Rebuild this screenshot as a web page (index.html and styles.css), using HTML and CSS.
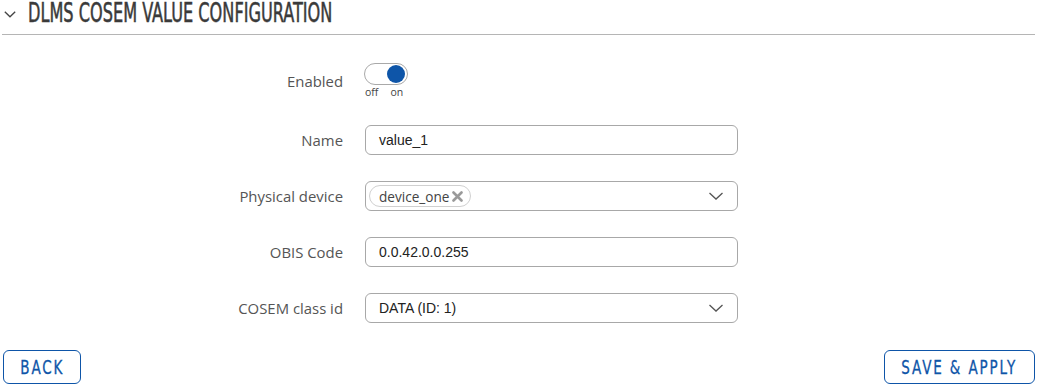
FILE: index.html
```html
<!DOCTYPE html>
<html>
<head>
<meta charset="utf-8">
<link rel="stylesheet" href="styles.css">
</head>
<body>
<div class="section-head">
  <svg class="chev" width="12" height="7" viewBox="0 0 12 7"><path d="M0.8 0.8 L6 5.8 L11.2 0.8" fill="none" stroke="#444" stroke-width="1.3"/></svg>
  <h2 class="title"><span class="squeeze">DLMS COSEM VALUE CONFIGURATION</span></h2>
</div>
<div class="form">
  <div class="row row-toggle">
    <label class="lbl">Enabled</label>
    <div class="ctrl">
      <div class="toggle"><span class="knob"></span></div>
      <div class="toggle-txt"><span>off</span><span>on</span></div>
    </div>
  </div>
  <div class="row">
    <label class="lbl">Name</label>
    <div class="ctrl"><div class="input">value_1</div></div>
  </div>
  <div class="row">
    <label class="lbl">Physical device</label>
    <div class="ctrl"><div class="input select">
      <span class="chip">device_one<svg class="x" width="11" height="11" viewBox="0 0 11 11"><path d="M1.5 1.5 L9.5 9.5 M9.5 1.5 L1.5 9.5" stroke="#9a9a9a" stroke-width="2.6" stroke-linecap="round"/></svg></span>
      <svg class="dd" width="16" height="10" viewBox="0 0 16 10"><path d="M1.5 2 L8 8 L14.5 2" fill="none" stroke="#555" stroke-width="1.3"/></svg>
    </div></div>
  </div>
  <div class="row">
    <label class="lbl">OBIS Code</label>
    <div class="ctrl"><div class="input">0.0.42.0.0.255</div></div>
  </div>
  <div class="row">
    <label class="lbl">COSEM class id</label>
    <div class="ctrl"><div class="input select">
      <span>DATA (ID: 1)</span>
      <svg class="dd" width="16" height="10" viewBox="0 0 16 10"><path d="M1.5 2 L8 8 L14.5 2" fill="none" stroke="#555" stroke-width="1.3"/></svg>
    </div></div>
  </div>
</div>
<div class="footer">
  <button class="btn btn-back"><span class="btn-txt">BACK</span></button>
  <button class="btn btn-save"><span class="btn-txt">SAVE &amp; APPLY</span></button>
</div>
</body>
</html>
```
FILE: styles.css
```css
html, body { margin: 0; padding: 0; background: #fff; }
body { font-family: "Open Sans", sans-serif; width: 1038px; }

.section-head {
  display: flex;
  align-items: flex-start;
  height: 34px;
  margin: 0 3px 0 2px;
  border-bottom: 1px solid #b5b5b5;
  padding-left: 2px;
}
.chev { margin-top: 11px; flex: none; }
.title {
  margin: -2px 0 0 12px;
  font-family: "DejaVu Sans Condensed", sans-serif;
  font-weight: normal;
  font-size: 26px;
  color: #3a3a3a;
  line-height: 30px;
  white-space: nowrap;
  -webkit-text-stroke: 0.5px #3a3a3a;
}
.squeeze {
  display: inline-block;
  transform: scaleX(0.69);
  transform-origin: left center;
}

.form {
  display: flex;
  flex-direction: column;
  gap: 26px;
  padding-top: 27px;
}
.row {
  display: grid;
  grid-template-columns: 343px 373px;
  column-gap: 22px;
  align-items: center;
  height: 30px;
}
.row-toggle { height: 37px; }
.lbl {
  text-align: right;
  font-size: 14.9px;
  color: #555;
}
.ctrl { display: flex; flex-direction: column; }

.toggle {
  width: 42px;
  height: 20px;
  border: 1px solid #a9a9a9;
  border-radius: 11px;
  position: relative;
  margin-left: -1px;
}
.knob {
  position: absolute;
  right: 2px;
  top: 1px;
  width: 18px;
  height: 18px;
  border-radius: 50%;
  background: #0e55a8;
}
.toggle-txt {
  display: flex;
  gap: 12px;
  font-size: 10.5px;
  color: #444;
  line-height: 12px;
  margin-top: 1px;
}

.input {
  height: 30px;
  box-sizing: border-box;
  border: 1px solid #a8a8a8;
  border-radius: 6px;
  display: flex;
  align-items: center;
  padding-left: 13px;
  font-family: "Liberation Sans", Arial, sans-serif;
  font-size: 14px;
  color: #222;
}
.select { justify-content: space-between; padding-right: 13px; }
.select .chip {
  font-family: "Open Sans", sans-serif;
  font-size: 13.6px;
  color: #444;
  border: 1px solid #d0d0d0;
  border-radius: 11px;
  height: 22px;
  box-sizing: border-box;
  display: flex;
  align-items: center;
  padding: 0 7px 0 9px;
  margin-left: -10px;
}
.chip .x { margin-left: 3px; }

.footer {
  display: flex;
  justify-content: space-between;
  padding: 0 3px;
  margin-top: 27px;
}
.btn {
  height: 34px;
  border: 1px solid #0e55a8;
  border-radius: 6px;
  background: #fff;
  color: #0e55a8;
  font-family: "DejaVu Sans Condensed", sans-serif;
  font-size: 20px;
  letter-spacing: 2.5px;
  padding: 0;
  display: flex;
  align-items: center;
  justify-content: center;
  -webkit-text-stroke: 0.3px #0e55a8;
}
.btn-txt {
  display: inline-block;
  transform: scaleX(0.75);
  white-space: nowrap;
}
.btn-back { width: 78px; }
.btn-save { width: 151px; }
```
